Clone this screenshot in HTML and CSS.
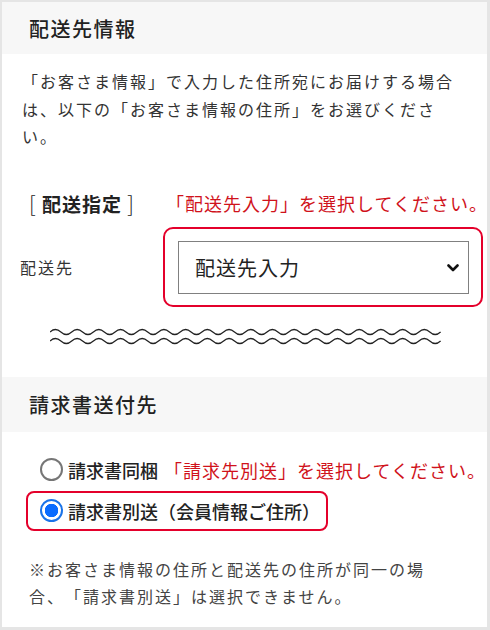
FILE: index.html
```html
<!DOCTYPE html>
<html lang="ja">
<head>
    <meta charset="UTF-8">
    <meta name="viewport" content="width=device-width, initial-scale=1.0">
    <title>配送先情報</title>
    <link rel="stylesheet" href="styles.css">
</head>
<body>
    <div class="card">
        <h2 class="section-title">配送先情報</h2>
        <p class="lead">「お客さま情報」で入力した住所宛にお届けする場合は、以下の「お客さま情報の住所」をお選びください。</p>

        <div class="assign-row">
            <span class="assign-title"><span class="bracket">[</span> 配送指定 <span class="bracket">]</span></span>
            <span class="hint">「配送先入力」を選択してください。</span>
        </div>

        <div class="field-row">
            <label class="field-label" for="ship-to">配送先</label>
            <div class="highlight select-box">
                <div class="select-wrap">
                    <select id="ship-to">
                        <option>配送先入力</option>
                        <option>お客さま情報の住所</option>
                    </select>
                    <!-- chevron drawn over the select -->
                    <svg class="chevron" width="12" height="8" viewBox="0 0 12 8">
                        <path d="M1.5 1.5 L6 6 L10.5 1.5" fill="none" stroke="#111" stroke-width="2.6" stroke-linecap="round" stroke-linejoin="round"/>
                    </svg>
                </div>
            </div>
        </div>

        <svg class="waves" width="392" height="22" viewBox="0 0 392 22">
            <path d="M0 7 q5.42 -5 10.85 0 t10.85 0 t10.85 0 t10.85 0 t10.85 0 t10.85 0 t10.85 0 t10.85 0 t10.85 0 t10.85 0 t10.85 0 t10.85 0 t10.85 0 t10.85 0 t10.85 0 t10.85 0 t10.85 0 t10.85 0 t10.85 0 t10.85 0 t10.85 0 t10.85 0 t10.85 0 t10.85 0 t10.85 0 t10.85 0 t10.85 0 t10.85 0 t10.85 0 t10.85 0 t10.85 0 t10.85 0 t10.85 0 t10.85 0 t10.85 0 t10.85 0" fill="none" stroke="#222" stroke-width="1.2"/>
            <path d="M0 16 q5.42 -5 10.85 0 t10.85 0 t10.85 0 t10.85 0 t10.85 0 t10.85 0 t10.85 0 t10.85 0 t10.85 0 t10.85 0 t10.85 0 t10.85 0 t10.85 0 t10.85 0 t10.85 0 t10.85 0 t10.85 0 t10.85 0 t10.85 0 t10.85 0 t10.85 0 t10.85 0 t10.85 0 t10.85 0 t10.85 0 t10.85 0 t10.85 0 t10.85 0 t10.85 0 t10.85 0 t10.85 0 t10.85 0 t10.85 0 t10.85 0 t10.85 0 t10.85 0" fill="none" stroke="#222" stroke-width="1.2"/>
        </svg>

        <h2 class="section-title tall">請求書送付先</h2>

        <div class="radio-row">
            <span class="radio"></span>
            <span class="radio-label">請求書同梱</span>
            <span class="hint">「請求先別送」を選択してください。</span>
        </div>

        <div class="highlight radio-box">
            <span class="radio checked"></span>
            <span class="radio-label">請求書別送（会員情報ご住所）</span>
        </div>

        <p class="note">※お客さま情報の住所と配送先の住所が同一の場合、「請求書別送」は選択できません。</p>
    </div>
</body>
</html>
```

FILE: styles.css
```css
html, body {
    height: 100%;
}
body {
    margin: 0;
    padding: 2px 3px 3px 2px;
    box-sizing: border-box;
    background-color: #e5e5e5;
    font-family: "Noto Sans CJK JP", "Noto Sans", sans-serif;
    color: #333;
    text-spacing-trim: space-all;
}
.card {
    height: 100%;
    background-color: #fff;
    overflow: hidden;
}
.section-title {
    margin: 0;
    height: 52px;
    display: flex;
    align-items: center;
    padding-left: 27px;
    background-color: #f7f7f7;
    font-size: 20px;
    font-weight: 500;
    letter-spacing: 1.5px;
    color: #222;
}
.section-title.tall {
    height: 55px;
    margin-top: 30px;
}
.lead {
    margin: 14px 0 0;
    padding: 0 20px;
    font-size: 16px;
    line-height: 27.5px;
    letter-spacing: 2px;
}
.assign-row {
    display: flex;
    align-items: center;
    margin-top: 38px;
    height: 28px;
    padding-left: 27px;
}
.assign-title {
    width: 137px;
    flex: none;
    font-size: 19px;
    font-weight: 700;
    letter-spacing: 1px;
    color: #222;
    white-space: nowrap;
}
.bracket {
    font-weight: 300;
    font-size: 21px;
}
.hint {
    font-size: 18px;
    letter-spacing: 1px;
    color: #d0121b;
    white-space: nowrap;
}
.field-row {
    display: flex;
    align-items: center;
    margin-top: 10px;
    padding-left: 18px;
}
.field-label {
    width: 143px;
    font-size: 16px;
    letter-spacing: 2px;
}
.highlight {
    border: 2px solid #e4002b;
    border-radius: 10px;
    box-sizing: border-box;
}
.select-box {
    width: 320px;
    height: 80px;
    padding: 12px 12px 11px 13px;
}
.select-wrap {
    position: relative;
    height: 53px;
}
.select-wrap select {
    appearance: none;
    -webkit-appearance: none;
    width: 100%;
    height: 100%;
    border: 1px solid #808080;
    border-radius: 0;
    background: #fff;
    padding: 0 0 0 16px;
    font-family: inherit;
    font-size: 20px;
    letter-spacing: 1px;
    color: #222;
}
.chevron {
    position: absolute;
    right: 10px;
    top: 23px;
}
.waves {
    display: block;
    margin: 18px 0 0 48px;
}
.radio-row {
    display: flex;
    align-items: center;
    margin-top: 24px;
    height: 28px;
    padding-left: 38px;
}
.radio {
    width: 19px;
    height: 19px;
    border: 2px solid #767676;
    border-radius: 50%;
    margin-right: 5px;
    flex: none;
    box-sizing: content-box;
}
.radio.checked {
    border-color: #1a73e8;
    background: radial-gradient(circle, #0a6cff 0 6.5px, #fff 7px);
}
.radio-label {
    font-size: 18px;
    font-weight: 500;
    color: #222;
    white-space: nowrap;
}
.radio-row .radio-label {
    margin-right: 6px;
}
.radio-box {
    display: flex;
    align-items: center;
    width: 302px;
    height: 40px;
    margin: 7px 0 0 24px;
    padding-left: 12px;
    border-radius: 8px;
}
.note {
    margin: 25px 0 0;
    padding: 0 60px 0 27px;
    font-size: 16px;
    line-height: 27px;
    letter-spacing: 2px;
    color: #444;
}
```
